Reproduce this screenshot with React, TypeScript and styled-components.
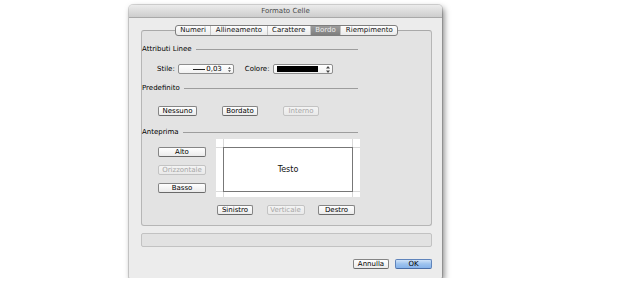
import React from "react";
import styled, { createGlobalStyle, css } from "styled-components";

const Global = createGlobalStyle`
  html, body { margin: 0; padding: 0; background: #ffffff; }
  body { font-family: "DejaVu Sans", "Liberation Sans", sans-serif; color: #000; }
  * { box-sizing: border-box; }
`;

const Page = styled.div`
  padding: 5px 0 0 129px;
`;

const Window = styled.div`
  width: 313px;
  height: 273px;
  background: #ececec;
  border-radius: 4px 4px 1px 1px;
  box-shadow: 0 0 0 1px rgba(0, 0, 0, 0.14), 2px 3px 6px rgba(0, 0, 0, 0.5);
  display: flex;
  flex-direction: column;
  overflow: hidden;
`;

const TitleBar = styled.div`
  height: 13px;
  flex: none;
  background: linear-gradient(#ebebeb, #cdcdcd);
  border-bottom: 1px solid #a9a9a9;
  font-size: 7px;
  line-height: 12px;
  text-align: center;
  color: #4a4a4a;
`;

const Content = styled.div`
  padding: 7px 10px 0 12px;
  display: flex;
  flex-direction: column;
`;

const TabWrap = styled.div`
  position: relative;
  z-index: 1;
  display: flex;
  justify-content: center;
  margin-bottom: -6px;
`;

const Tabs = styled.div`
  display: inline-flex;
  border: 1px solid #7e7e7e;
  border-radius: 3px;
  overflow: hidden;
  background: linear-gradient(#fefefe, #ebebeb);
`;

const Tab = styled.div<{ $active?: boolean }>`
  font-size: 7px;
  line-height: 9px;
  padding: 0 4.5px;
  color: #111;
  & + & { border-left: 1px solid #c4c4c4; }
  ${(p) =>
    p.$active &&
    css`
      background: linear-gradient(#9c9c9c, #7e7e7e);
      color: #ececec;
    `}
`;

const GroupBox = styled.div`
  height: 196px;
  border: 1px solid #b6b6b6;
  border-top-color: #a9a9a9;
  border-radius: 3px;
  background: #e3e3e3;
  padding-top: 14px;
  display: flex;
  flex-direction: column;
`;

const Header = styled.div<{ $mt?: number }>`
  display: flex;
  align-items: center;
  gap: 4px;
  width: 216px;
  font-size: 7px;
  line-height: 9px;
  margin-top: ${(p) => p.$mt ?? 0}px;
  &::after {
    content: "";
    flex: 1;
    height: 1px;
    background: #9d9d9d;
  }
`;

const StileRow = styled.div`
  display: flex;
  align-items: center;
  gap: 11px;
  margin-top: 10px;
  padding-left: 15px;
  height: 10px;
`;

const Field = styled.div`
  display: flex;
  align-items: center;
  gap: 3px;
  font-size: 7px;
  line-height: 9px;
`;

const Popup = styled.div<{ $w: number }>`
  width: ${(p) => p.$w}px;
  height: 10px;
  border: 1px solid #8e8e8e;
  border-radius: 2px;
  background: linear-gradient(#ffffff, #f1f1f1);
  display: flex;
  align-items: center;
  padding: 0 2px 0 3px;
  gap: 1px;
`;

const LineSample = styled.span`
  width: 17px;
  height: 1px;
  background: #222;
  margin-left: 11px;
`;

const PopupValue = styled.span`
  font-size: 7px;
  line-height: 8px;
  flex: 1;
  text-align: right;
  padding-right: 5px;
`;

const Swatch = styled.span`
  width: 41px;
  height: 6px;
  background: #000;
  margin-right: auto;
`;

const PresetRow = styled.div`
  display: flex;
  gap: 25px;
  margin-top: 13px;
  padding-left: 16px;
`;

const Button = styled.button<{ $w: number; $primary?: boolean }>`
  width: ${(p) => p.$w}px;
  height: 10px;
  padding: 0;
  margin: 0;
  border: 1px solid #858585;
  border-bottom-color: #6a6a6a;
  border-radius: 2px;
  background: linear-gradient(#ffffff, #ebebeb);
  font-family: "DejaVu Sans", "Liberation Sans", sans-serif;
  font-size: 7px;
  line-height: 8px;
  color: #000;
  text-align: center;
  &:disabled {
    border-color: #c3c3c3;
    background: linear-gradient(#f4f4f4, #e9e9e9);
    color: #a6a6a6;
  }
  ${(p) =>
    p.$primary &&
    css`
      border-color: #5f84bb;
      border-bottom-color: #4a6ea6;
      background: linear-gradient(#cfe2f8, #9cc2ee 50%, #86b3ea);
    `}
`;

const PreviewGrid = styled.div`
  display: grid;
  grid-template-columns: 48px 144px;
  column-gap: 10px;
  margin-top: 2px;
  padding-left: 16px;
`;

const SideButtons = styled.div`
  display: flex;
  flex-direction: column;
  gap: 8px;
  padding-top: 8px;
`;

const Preview = styled.div`
  width: 144px;
  height: 58px;
  padding: 8px 7px 5px 7px;
  background:
    linear-gradient(#d9d9d9, #d9d9d9) 0 8px / 100% 1px no-repeat,
    linear-gradient(#d9d9d9, #d9d9d9) 0 calc(100% - 5px) / 100% 1px no-repeat,
    linear-gradient(#d9d9d9, #d9d9d9) 7px 0 / 1px 100% no-repeat,
    linear-gradient(#d9d9d9, #d9d9d9) calc(100% - 7px) 0 / 1px 100% no-repeat,
    #ffffff;
`;

const PreviewCell = styled.div`
  width: 100%;
  height: 100%;
  border: 1px solid #777;
  background: #fff;
  display: flex;
  align-items: center;
  justify-content: center;
  font-size: 8px;
  color: #111;
`;

const BottomRow = styled.div`
  display: flex;
  justify-content: space-between;
  width: 144px;
  margin: 8px 0 0 74px;
  padding: 0 5px 0 1px;
`;

const StatusField = styled.div`
  height: 14px;
  margin-top: 7px;
  border: 1px solid #c2c2c2;
  border-radius: 2px;
  background: #e2e2e2;
`;

const Footer = styled.div`
  display: flex;
  justify-content: flex-end;
  gap: 6px;
  margin-top: 12px;
`;

const Arrows = () => (
  <svg width="4" height="7" viewBox="0 0 4 7">
    <path d="M2 0 L4 2.6 H0 Z M0 4.4 H4 L2 7 Z" fill="#444" />
  </svg>
);

const tabs = ["Numeri", "Allineamento", "Carattere", "Bordo", "Riempimento"];

export default function App() {
  return (
    <>
      <Global />
      <Page>
        <Window>
          <TitleBar>Formato Celle</TitleBar>
          <Content>
            <TabWrap>
              <Tabs>
                {tabs.map((t) => (
                  <Tab key={t} $active={t === "Bordo"}>
                    {t}
                  </Tab>
                ))}
              </Tabs>
            </TabWrap>
            <GroupBox>
              <Header>Attributi Linee</Header>
              <StileRow>
                <Field>
                  <span>Stile:</span>
                  <Popup $w={56}>
                    <LineSample />
                    <PopupValue>0,03</PopupValue>
                    <Arrows />
                  </Popup>
                </Field>
                <Field>
                  <span>Colore:</span>
                  <Popup $w={60}>
                    <Swatch />
                    <Arrows />
                  </Popup>
                </Field>
              </StileRow>
              <Header $mt={10}>Predefinito</Header>
              <PresetRow>
                <Button $w={39}>Nessuno</Button>
                <Button $w={36}>Bordato</Button>
                <Button $w={36} disabled>
                  Interno
                </Button>
              </PresetRow>
              <Header $mt={12}>Anteprima</Header>
              <PreviewGrid>
                <SideButtons>
                  <Button $w={48}>Alto</Button>
                  <Button $w={48} disabled>
                    Orizzontale
                  </Button>
                  <Button $w={48}>Basso</Button>
                </SideButtons>
                <Preview>
                  <PreviewCell>Testo</PreviewCell>
                </Preview>
              </PreviewGrid>
              <BottomRow>
                <Button $w={36}>Sinistro</Button>
                <Button $w={38} disabled>
                  Verticale
                </Button>
                <Button $w={37}>Destro</Button>
              </BottomRow>
            </GroupBox>
            <StatusField />
            <Footer>
              <Button $w={36}>Annulla</Button>
              <Button $w={37} $primary>
                OK
              </Button>
            </Footer>
          </Content>
        </Window>
      </Page>
    </>
  );
}
